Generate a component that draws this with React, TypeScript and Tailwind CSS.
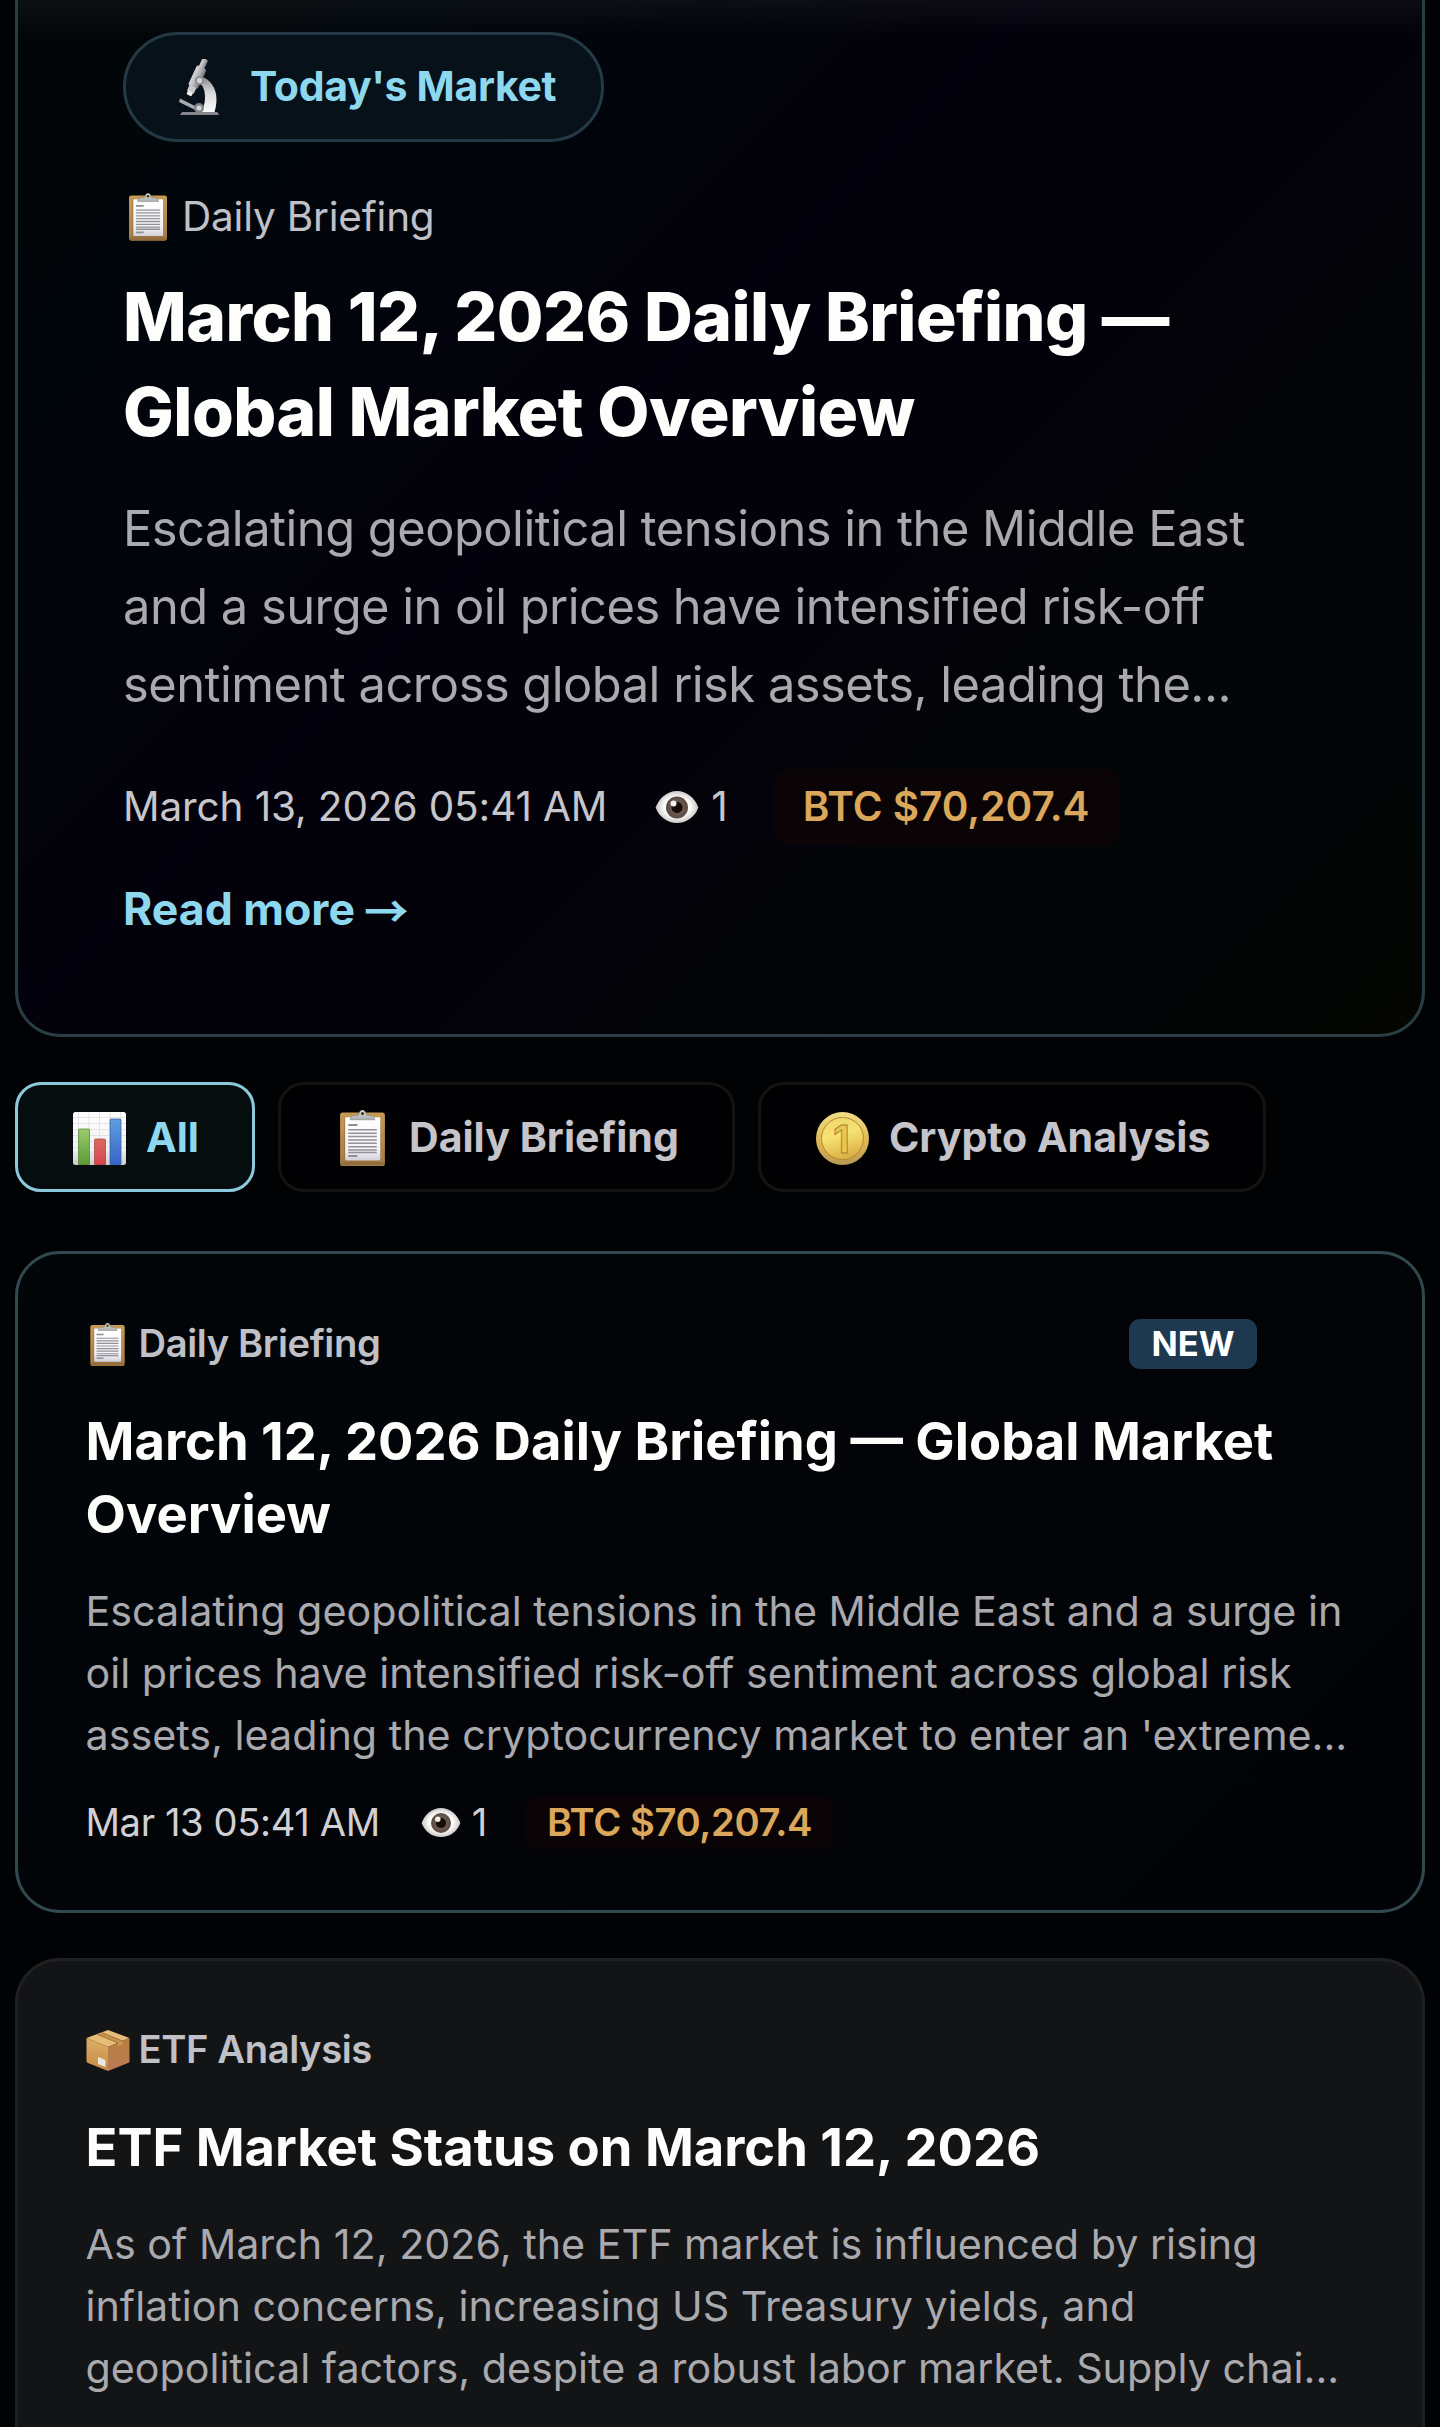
import type { ReactNode } from "react";

type IconProps = { className?: string };

function ClipboardIcon({ className }: IconProps) {
  return (
    <svg viewBox="0 0 44 55" className={className} aria-hidden="true">
      <defs>
        <linearGradient id="clip-board" x1="0" y1="0" x2="0" y2="1">
          <stop offset="0" stopColor="#c79a55" />
          <stop offset="1" stopColor="#a57a43" />
        </linearGradient>
        <linearGradient id="clip-paper" x1="0" y1="0" x2="0" y2="1">
          <stop offset="0" stopColor="#ffffff" />
          <stop offset="0.75" stopColor="#f3f3f8" />
          <stop offset="1" stopColor="#d2d1dc" />
        </linearGradient>
        <linearGradient id="clip-metal" x1="0" y1="0" x2="0" y2="1">
          <stop offset="0" stopColor="#e2e4e4" />
          <stop offset="1" stopColor="#a9adac" />
        </linearGradient>
      </defs>
      <rect x="0" y="2.5" width="44" height="52.5" rx="2.5" fill="url(#clip-board)" />
      <rect x="1" y="51" width="42" height="3" rx="1" fill="#86643a" opacity="0.6" />
      <rect x="4" y="7" width="36" height="43.5" rx="1.5" fill="#8d6a38" opacity="0.55" />
      <rect x="5" y="7" width="34.5" height="42.5" rx="1" fill="url(#clip-paper)" />
      <path d="M8 14.7h9M8 45.2h9" stroke="#8d8d93" strokeWidth="2" />
      <path
        d="M8 19.5h28M8 22.8h28M8 26.1h28M8 29.4h28M8 32.7h28M8 36h28M8 39.3h28M8 41.7h28"
        stroke="#919196"
        strokeWidth="1.5"
      />
      <path
        d="M10 9.6c0-3 1.4-4.2 4.2-4.2h2.6c1.2 0 1.6-.8 1.9-2C19.2 1.2 20.5 0 22 0s2.8 1.2 3.3 3.4c.3 1.2.7 2 1.9 2h2.6c2.8 0 4.2 1.2 4.2 4.2Z"
        fill="url(#clip-metal)"
        stroke="#7f8381"
        strokeWidth="0.6"
      />
      <circle cx="22" cy="3.4" r="1.5" fill="#33302a" />
    </svg>
  );
}

function MicroscopeIcon({ className }: IconProps) {
  return (
    <svg viewBox="0 0 40 56" className={className} aria-hidden="true">
      <defs>
        <linearGradient id="scope-arm" x1="0" y1="0" x2="0" y2="1">
          <stop offset="0" stopColor="#8c8c90" />
          <stop offset="0.45" stopColor="#d8d8da" />
          <stop offset="1" stopColor="#fafafa" />
        </linearGradient>
        <linearGradient id="scope-tube" x1="0" y1="0" x2="1" y2="0">
          <stop offset="0" stopColor="#d9d9da" />
          <stop offset="0.5" stopColor="#b5b6b8" />
          <stop offset="1" stopColor="#77787b" />
        </linearGradient>
      </defs>
      <path d="M23 18c8 2 14.5 11 14.5 22 0 5-.8 9-2 13H21c4-5 5-9 5-15 0-6-1.500-10-5-14Z" fill="url(#scope-arm)" />
      <g transform="rotate(25 15 20)">
        <rect x="14" y="-3" width="6" height="12" rx="1.5" fill="url(#scope-tube)" />
        <rect x="12" y="6" width="10.5" height="22" rx="2" fill="url(#scope-tube)" />
        <rect x="13.5" y="27" width="7.5" height="7" rx="1.5" fill="#c9cacb" />
        <rect x="14.5" y="33" width="5.5" height="4" rx="1" fill="#f1f1f1" />
      </g>
      <circle cx="20.5" cy="21.5" r="4.6" fill="#8c8d90" />
      <circle cx="20.5" cy="21.5" r="2.6" fill="#d5d5d6" />
      <path d="m1 39.5 16 8-1.2 3.2L0 43Z" fill="#a9abad" />
      <circle cx="20" cy="49" r="5" fill="#808184" />
      <circle cx="20" cy="49" r="2.6" fill="#d2d2d3" />
      <path d="M3 53h35.5l1.5 3H1Z" fill="#85858c" />
    </svg>
  );
}

function EyeIcon({ className }: IconProps) {
  return (
    <svg viewBox="0 0 44 34" className={className} aria-hidden="true">
      <defs>
        <radialGradient id="eye-white">
          <stop offset="0.6" stopColor="#ffffff" />
          <stop offset="1" stopColor="#c9c6c2" />
        </radialGradient>
        <radialGradient id="eye-iris">
          <stop offset="0.4" stopColor="#2b1c15" />
          <stop offset="0.55" stopColor="#6b594e" />
          <stop offset="1" stopColor="#5a4b43" />
        </radialGradient>
      </defs>
      <path d="M.7 17.5C4 8 12.5 1 22 1s18 7 21.3 16.5C40 27 31.5 33 22 33S4 27 .7 17.5Z" fill="url(#eye-white)" />
      <circle cx="22" cy="17.5" r="11" fill="url(#eye-iris)" />
      <circle cx="22" cy="17.5" r="5.4" fill="#160d09" />
      <circle cx="18.5" cy="13.5" r="3" fill="#f4efeb" />
    </svg>
  );
}

function ChartIcon({ className }: IconProps) {
  return (
    <svg viewBox="0 0 53 53" className={className} aria-hidden="true">
      <defs>
        <linearGradient id="chart-bg" x1="0" y1="0" x2="0" y2="1">
          <stop offset="0" stopColor="#ffffff" />
          <stop offset="0.7" stopColor="#f1f2f2" />
          <stop offset="1" stopColor="#c9cbcb" />
        </linearGradient>
        <linearGradient id="chart-green" x1="0" y1="0" x2="0" y2="1">
          <stop offset="0" stopColor="#9bcb70" />
          <stop offset="1" stopColor="#5b9a34" />
        </linearGradient>
        <linearGradient id="chart-red" x1="0" y1="0" x2="0" y2="1">
          <stop offset="0" stopColor="#dc6a64" />
          <stop offset="1" stopColor="#d4444c" />
        </linearGradient>
        <linearGradient id="chart-blue" x1="0" y1="0" x2="0" y2="1">
          <stop offset="0" stopColor="#5f9fdc" />
          <stop offset="1" stopColor="#3763cb" />
        </linearGradient>
      </defs>
      <rect width="53" height="53" rx="2.5" fill="url(#chart-bg)" />
      <path
        d="M5.5 0v53M16 0v53M26.5 0v53M37 0v53M47.5 0v53M0 5.5h53M0 11.5h53M0 17.5h53M0 23.5h53M0 29.5h53M0 35.5h53M0 41.5h53M0 47.5h53"
        stroke="#dcdfe0"
        strokeWidth="0.8"
      />
      <rect x="5.5" y="17" width="11" height="36" rx="1" fill="url(#chart-green)" stroke="#4b7c2c" strokeWidth="0.7" />
      <rect x="21.5" y="27" width="11" height="26" rx="1" fill="url(#chart-red)" stroke="#a53a3c" strokeWidth="0.7" />
      <rect x="37" y="7" width="11" height="46" rx="1" fill="url(#chart-blue)" stroke="#345c9e" strokeWidth="0.7" />
    </svg>
  );
}

function CoinIcon({ className }: IconProps) {
  return (
    <svg viewBox="0 0 53 53" className={className} aria-hidden="true">
      <defs>
        <linearGradient id="coin-rim" x1="0" y1="0" x2="0" y2="1">
          <stop offset="0" stopColor="#f1dd86" />
          <stop offset="0.6" stopColor="#dcb64f" />
          <stop offset="1" stopColor="#b89a55" />
        </linearGradient>
        <linearGradient id="coin-face" x1="0" y1="0" x2="0.3" y2="1">
          <stop offset="0" stopColor="#efd569" />
          <stop offset="0.5" stopColor="#f7e274" />
          <stop offset="1" stopColor="#dfb347" />
        </linearGradient>
      </defs>
      <circle cx="26.5" cy="26.5" r="26.5" fill="url(#coin-rim)" />
      <circle cx="26.5" cy="26.5" r="21" fill="url(#coin-face)" stroke="#b08a2f" strokeWidth="1" />
      <text
        x="25.5"
        y="40.5"
        textAnchor="middle"
        fontSize="38"
        fontWeight="700"
        fill="#e6c654"
        stroke="#a67f2b"
        strokeWidth="0.9"
        className="font-['Inter',sans-serif]"
      >
        1
      </text>
    </svg>
  );
}

function PackageIcon({ className }: IconProps) {
  return (
    <svg viewBox="0 0 44 41" className={className} aria-hidden="true">
      <defs>
        <linearGradient id="box-left" x1="0" y1="0" x2="0" y2="1">
          <stop offset="0" stopColor="#dfae62" />
          <stop offset="1" stopColor="#c48a46" />
        </linearGradient>
        <linearGradient id="box-right" x1="0" y1="0" x2="0" y2="1">
          <stop offset="0" stopColor="#b5803f" />
          <stop offset="1" stopColor="#bb7a55" />
        </linearGradient>
      </defs>
      <path d="M22 0 43.5 8 22 17 .5 8Z" fill="#e6bc78" />
      <path d="M.5 8 22 17v24L2 33C1 32.500.5 32 .5 31Z" fill="url(#box-left)" />
      <path d="M43.5 8 22 17v24l20-8c1-.5 1.5-1 1.5-2Z" fill="url(#box-right)" />
      <path d="M10.5 4.3 32 13v3.5l4.500-2V11l-21-8.500Z" fill="#c9944d" />
      <path d="m11 4.2 21 8.8M15.5 2.5l21 8.6" stroke="#8f6230" strokeWidth="0.8" fill="none" />
      <path d="m12 27 7.5 3v7L12 34Z" fill="#ece9e4" />
    </svg>
  );
}

function Price({ className, children }: { className: string; children: ReactNode }) {
  return (
    <span className={`flex items-center bg-[#0b0406] font-semibold text-[#dba75a] ${className}`}>{children}</span>
  );
}

function Hero() {
  return (
    <section className="flex flex-col items-start rounded-b-[45px] border-3 border-t-0 border-[#2a3d45] bg-[linear-gradient(180deg,rgba(255,255,255,0.04),transparent_36px),linear-gradient(135deg,#020606_0%,#01060c_18%,#03010b_42%,#03020a_58%,#030508_72%,#020506_86%,#010504_92%,#050600_100%)] pt-8 pr-24 pb-[95px] pl-[105px]">
      <div className="flex h-[110px] items-center rounded-full border-3 border-[#233a44] bg-[#07111a] pr-[45px] pl-[53px] text-[41px] font-bold tracking-[-0.33px] text-[#8ed8ef]">
        <MicroscopeIcon className="h-[56px] w-[40px]" />
        <span className="ml-[31px] whitespace-nowrap">Today's Market</span>
      </div>

      <div className="mt-[45px] flex h-[60px] items-center text-[40.5px] tracking-[-0.2px] text-[#c0c0c7]">
        <ClipboardIcon className="ml-[6px] h-[48px] w-[38px]" />
        <span className="ml-[15px]">Daily Briefing</span>
      </div>

      <h1 className="mt-[23px] text-[67.6px] leading-[94.6px] font-extrabold tracking-[-0.55px] whitespace-nowrap text-[#fdfdfb]">
        March 12, 2026 Daily Briefing —
        <br />
        Global Market Overview
      </h1>

      <p className="mt-[31px] text-[48.8px] leading-[78px] tracking-[-0.5px] whitespace-nowrap text-[#a9a9ae]">
        Escalating geopolitical tensions in the Middle East
        <br />
        and a surge in oil prices have intensified risk-off
        <br />
        sentiment across global risk assets, leading the...
      </p>

      <div className="mt-[45px] flex h-[76px] items-center text-[40.5px] whitespace-nowrap text-[#c6c6cb]">
        <span className="tracking-[-0.12px]">March 13, 2026 05:41 AM</span>
        <EyeIcon className="ml-[48px] h-[34px] w-[44px]" />
        <span className="ml-3">1</span>
        <Price className="ml-[46px] h-[76px] rounded-[12px] px-[29px]">BTC $70,207.4</Price>
      </div>

      <a href="#" className="mt-[34px] flex items-center text-[44.6px] leading-[60px] font-bold text-[#8ed8ef]">
        Read more
        <span className="ml-[9px] font-['Noto_Sans_CJK_JP',sans-serif] font-bold">→</span>
      </a>
    </section>
  );
}

const tabs = [
  { label: "All", icon: <ChartIcon className="size-[53px]" />, active: true },
  { label: "Daily Briefing", icon: <ClipboardIcon className="mx-1 h-[56px] w-[45px]" />, active: false },
  { label: "Crypto Analysis", icon: <CoinIcon className="size-[53px]" />, active: false },
];

function CategoryTabs() {
  return (
    <nav className="mt-[45px] flex gap-[23px]">
      {tabs.map((tab) => (
        <button
          key={tab.label}
          type="button"
          className={`flex h-[110px] items-center gap-[20px] rounded-[26px] border-3 pt-[2px] pr-[53px] pl-[55px] text-[41.1px] font-bold whitespace-nowrap ${
            tab.active ? "border-[#8cc9dc] bg-[#060d0f] text-[#8ed8ef]" : "border-[#131314] bg-[#010103] text-[#c4c4ca]"
          }`}
        >
          {tab.icon}
          {tab.label}
        </button>
      ))}
    </nav>
  );
}

interface Post {
  category: string;
  icon: ReactNode;
  title: ReactNode;
  excerpt: string[];
  date?: string;
  views?: number;
  price?: string;
  isNew?: boolean;
}

const posts: Post[] = [
  {
    category: "Daily Briefing",
    icon: <ClipboardIcon className="mr-[14px] ml-1 h-[43px] w-[35px]" />,
    title: (
      <>
        March 12, 2026 Daily Briefing — Global Market
        <br />
        Overview
      </>
    ),
    excerpt: [
      "Escalating geopolitical tensions in the Middle East and a surge in",
      "oil prices have intensified risk-off sentiment across global risk",
      "assets, leading the cryptocurrency market to enter an 'extreme...",
    ],
    date: "Mar 13 05:41 AM",
    views: 1,
    price: "BTC $70,207.4",
    isNew: true,
  },
  {
    category: "ETF Analysis",
    icon: <PackageIcon className="mr-[9px] h-[41px] w-[44px]" />,
    title: "ETF Market Status on March 12, 2026",
    excerpt: [
      "As of March 12, 2026, the ETF market is influenced by rising",
      "inflation concerns, increasing US Treasury yields, and",
      "geopolitical factors, despite a robust labor market. Supply chai...",
    ],
  },
];

function PostCard({ post }: { post: Post }) {
  return (
    <article
      className={`rounded-[45px] border-3 px-[67.5px] ${
        post.isNew
          ? "h-[662px] border-[#31484f] bg-[linear-gradient(135deg,#010609,#030408_50%,#020307)] pt-[65px]"
          : "h-[560px] border-[#1f2022] bg-[#131416] pt-16"
      }`}
    >
      <div className="flex h-[50px] items-center text-[38.2px] font-semibold tracking-[-0.4px] text-[#c0c0c7]">
        {post.icon}
        <span className="-mt-[2px]">{post.category}</span>
        {post.isNew && (
          <span className="mr-[98px] ml-auto flex h-[50px] items-center rounded-[11px] bg-[#1e3850] px-[22px] text-[34.5px] font-bold tracking-normal text-white">
            NEW
          </span>
        )}
      </div>

      <h2 className="mt-[36px] text-[52.5px] leading-[73px] font-bold whitespace-nowrap text-[#fdfdfb]">
        {post.title}
      </h2>

      <p className="mt-[30px] text-[41.25px] leading-[61.7px] whitespace-nowrap text-[#a9a9ae]">
        {post.excerpt.map((line) => (
          <span key={line} className="block">
            {line}
          </span>
        ))}
      </p>

      {post.date && (
        <div className="mt-[28px] flex h-[56px] items-center text-[38.2px] tracking-[-0.4px] whitespace-nowrap text-[#d0d0d5]">
          <span>{post.date}</span>
          <EyeIcon className="ml-[41px] h-[31px] w-[40px]" />
          <span className="ml-[11px]">{post.views}</span>
          <Price className="ml-[39px] h-[53px] rounded-[10px] px-[21px]">{post.price}</Price>
        </div>
      )}
    </article>
  );
}

export default function App() {
  return (
    <main className="h-[2427px] overflow-hidden bg-[#010203] px-[15px] font-['Inter',sans-serif]">
      <Hero />
      <CategoryTabs />
      <div className="mt-[59px] flex flex-col gap-[45px]">
        {posts.map((post) => (
          <PostCard key={post.category} post={post} />
        ))}
      </div>
    </main>
  );
}
